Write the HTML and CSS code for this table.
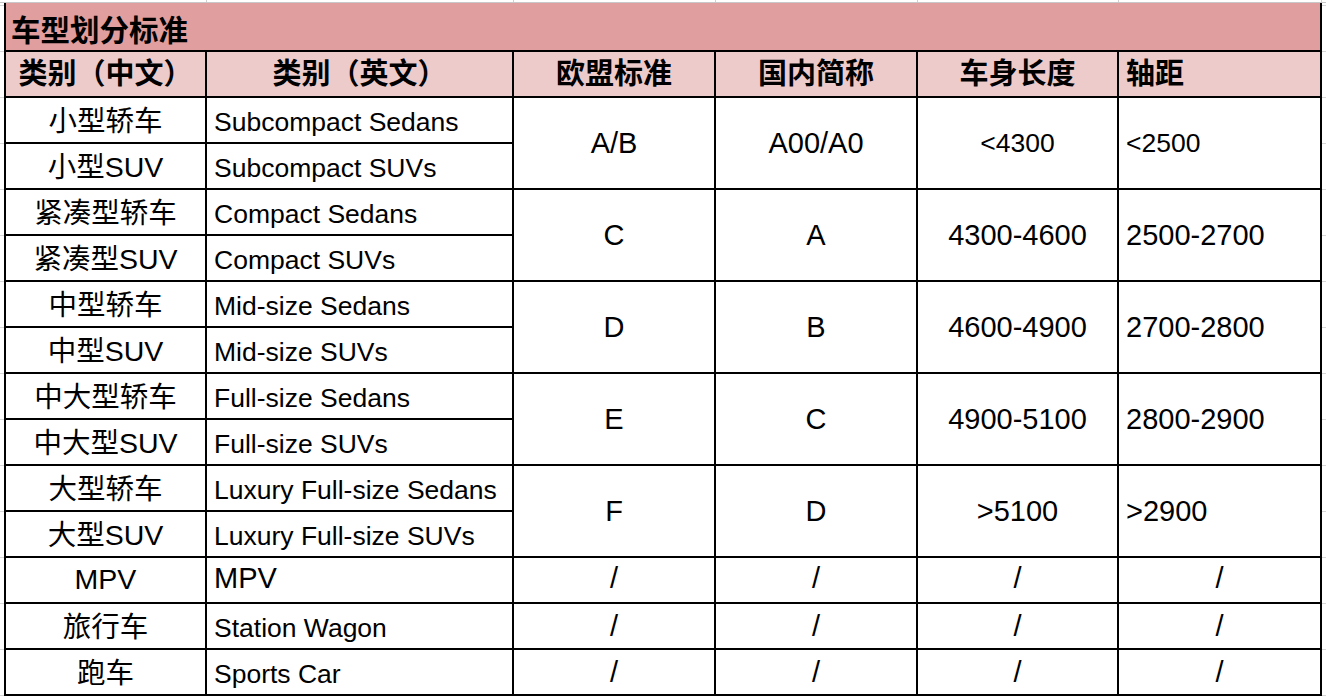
FILE: index.html
```html
<!DOCTYPE html>
<html lang="zh-CN">
<head>
<meta charset="utf-8">
<title>车型划分标准</title>
<link rel="stylesheet" href="styles.css">
</head>
<body>
<div class="page">
  <div class="prev">
    <div></div><div></div><div></div><div></div><div></div><div></div>
  </div>
  <div class="sheet">
    <div class="c title">车型划分标准</div>

    <div class="c hd ctr">类别（中文）</div>
    <div class="c hd ctr">类别（英文）</div>
    <div class="c hd ctr">欧盟标准</div>
    <div class="c hd ctr">国内简称</div>
    <div class="c hd ctr">车身长度</div>
    <div class="c hd">轴距</div>

    <div class="c zh ctr">小型轿车</div>
    <div class="c">Subcompact Sedans</div>
    <div class="c rs2 mid ctr big">A/B</div>
    <div class="c rs2 mid ctr big">A00/A0</div>
    <div class="c rs2 mid ctr">&lt;4300</div>
    <div class="c rs2 mid">&lt;2500</div>
    <div class="c zh ctr">小型SUV</div>
    <div class="c">Subcompact SUVs</div>

    <div class="c zh ctr">紧凑型轿车</div>
    <div class="c">Compact Sedans</div>
    <div class="c rs2 mid ctr big">C</div>
    <div class="c rs2 mid ctr big">A</div>
    <div class="c rs2 mid ctr big">4300-4600</div>
    <div class="c rs2 mid big">2500-2700</div>
    <div class="c zh ctr">紧凑型SUV</div>
    <div class="c">Compact SUVs</div>

    <div class="c zh ctr">中型轿车</div>
    <div class="c">Mid-size Sedans</div>
    <div class="c rs2 mid ctr big">D</div>
    <div class="c rs2 mid ctr big">B</div>
    <div class="c rs2 mid ctr big">4600-4900</div>
    <div class="c rs2 mid big">2700-2800</div>
    <div class="c zh ctr">中型SUV</div>
    <div class="c">Mid-size SUVs</div>

    <div class="c zh ctr">中大型轿车</div>
    <div class="c">Full-size Sedans</div>
    <div class="c rs2 mid ctr big">E</div>
    <div class="c rs2 mid ctr big">C</div>
    <div class="c rs2 mid ctr big">4900-5100</div>
    <div class="c rs2 mid big">2800-2900</div>
    <div class="c zh ctr">中大型SUV</div>
    <div class="c">Full-size SUVs</div>

    <div class="c zh ctr">大型轿车</div>
    <div class="c">Luxury Full-size Sedans</div>
    <div class="c rs2 mid ctr big">F</div>
    <div class="c rs2 mid ctr big">D</div>
    <div class="c rs2 mid ctr big">&gt;5100</div>
    <div class="c rs2 mid big">&gt;2900</div>
    <div class="c zh ctr">大型SUV</div>
    <div class="c">Luxury Full-size SUVs</div>

    <div class="c zh ctr mpv">MPV</div>
    <div class="c mpv big">MPV</div>
    <div class="c ctr mpv big">/</div>
    <div class="c ctr mpv big">/</div>
    <div class="c ctr mpv big">/</div>
    <div class="c ctr mpv big">/</div>

    <div class="c zh ctr">旅行车</div>
    <div class="c">Station Wagon</div>
    <div class="c ctr big">/</div>
    <div class="c ctr big">/</div>
    <div class="c ctr big">/</div>
    <div class="c ctr big">/</div>

    <div class="c zh ctr">跑车</div>
    <div class="c">Sports Car</div>
    <div class="c ctr big">/</div>
    <div class="c ctr big">/</div>
    <div class="c ctr big">/</div>
    <div class="c ctr big">/</div>
  </div>
</div>
</body>
</html>
```

FILE: styles.css
```css
html, body {
  margin: 0;
  padding: 0;
  background: #ffffff;
}

body {
  font-family: "Liberation Sans", "Noto Sans CJK SC", sans-serif;
  color: #000000;
}

.page {
  width: 1326px;
  height: 698px;
  overflow: hidden;
  background-image: linear-gradient(to bottom, transparent 5px, #d6d6d6 5px, #d6d6d6 6px, transparent 6px);
  background-size: 100% 46px;
}

.prev {
  display: grid;
  grid-template-columns: 201px 307px 202px 202px 201px 203px;
  height: 2px;
  padding-left: 6px;
  border-bottom: 1px solid #c8c8c8;
  background: #ffffff;
}

.prev div {
  border-right: 1px solid #d0d0d0;
}

.sheet {
  display: grid;
  grid-template-columns: 201px 307px 202px 202px 201px 203px;
  grid-template-rows: 49px repeat(14, 46px);
  width: max-content;
  margin-left: 4px;
  border-left: 2px solid #000000;
  background: #ffffff;
}

.c {
  box-sizing: border-box;
  display: flex;
  align-items: flex-end;
  padding: 0 7px 7px 7px;
  border-right: 2px solid #000000;
  border-bottom: 2px solid #000000;
  font-size: 26.5px;
  line-height: 1;
  white-space: nowrap;
  overflow: hidden;
}

.ctr {
  justify-content: center;
}

.zh {
  font-size: 28.5px;
}

.big {
  font-size: 29px;
}

.mid {
  align-items: center;
  padding-bottom: 0;
  padding-top: 1px;
}

.rs2 {
  grid-row: span 2;
}

.mpv {
  padding-bottom: 9px;
}

.title {
  grid-column: 1 / -1;
  background: #e09e9e;
  font-size: 29.5px;
  font-weight: bold;
  padding-left: 5px;
  padding-bottom: 5px;
}

.hd {
  background: #edcbcb;
  font-size: 29px;
  font-weight: bold;
  padding-bottom: 7px;
}
```
